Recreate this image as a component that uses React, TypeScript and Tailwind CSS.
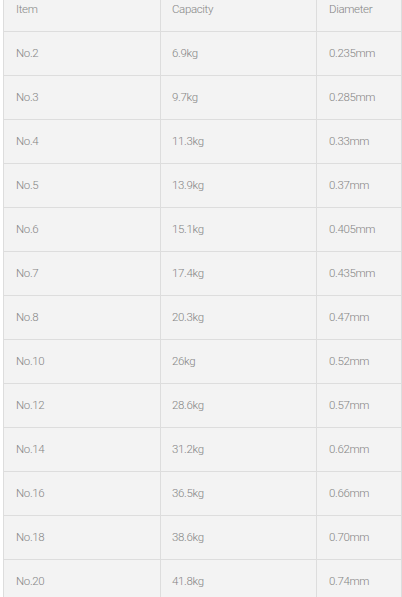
const rows: [string, string, string][] = [
  ["No.2", "6.9kg", "0.235mm"],
  ["No.3", "9.7kg", "0.285mm"],
  ["No.4", "11.3kg", "0.33mm"],
  ["No.5", "13.9kg", "0.37mm"],
  ["No.6", "15.1kg", "0.405mm"],
  ["No.7", "17.4kg", "0.435mm"],
  ["No.8", "20.3kg", "0.47mm"],
  ["No.10", "26kg", "0.52mm"],
  ["No.12", "28.6kg", "0.57mm"],
  ["No.14", "31.2kg", "0.62mm"],
  ["No.16", "36.5kg", "0.66mm"],
  ["No.18", "38.6kg", "0.70mm"],
  ["No.20", "41.8kg", "0.74mm"],
];

function Row({ cells }: { cells: [string, string, string] }) {
  return (
    <div className="grid h-[44px] grid-cols-[157px_156px_85px] border-b border-[#dddddd]">
      <div className="flex items-center border-l border-[#dddddd] pl-3">{cells[0]}</div>
      <div className="flex items-center border-l border-[#dddddd] pl-[11px]">{cells[1]}</div>
      <div className="flex items-center border-l border-[#dddddd] pl-3">{cells[2]}</div>
    </div>
  );
}

export default function App() {
  return (
    <div className="h-[597px] overflow-hidden bg-white">
      <div
        className="-mt-[12px] ml-[3px] w-[399px] border-r border-[#dddddd] bg-[#f3f3f3] text-[11.5px] font-light tracking-[-0.35px] text-[#858585]"
        style={{ fontFamily: 'Roboto, "Liberation Sans", sans-serif' }}
      >
        <Row cells={["Item", "Capacity", "Diameter"]} />
        {rows.map((r) => (
          <Row key={r[0]} cells={r} />
        ))}
      </div>
    </div>
  );
}
